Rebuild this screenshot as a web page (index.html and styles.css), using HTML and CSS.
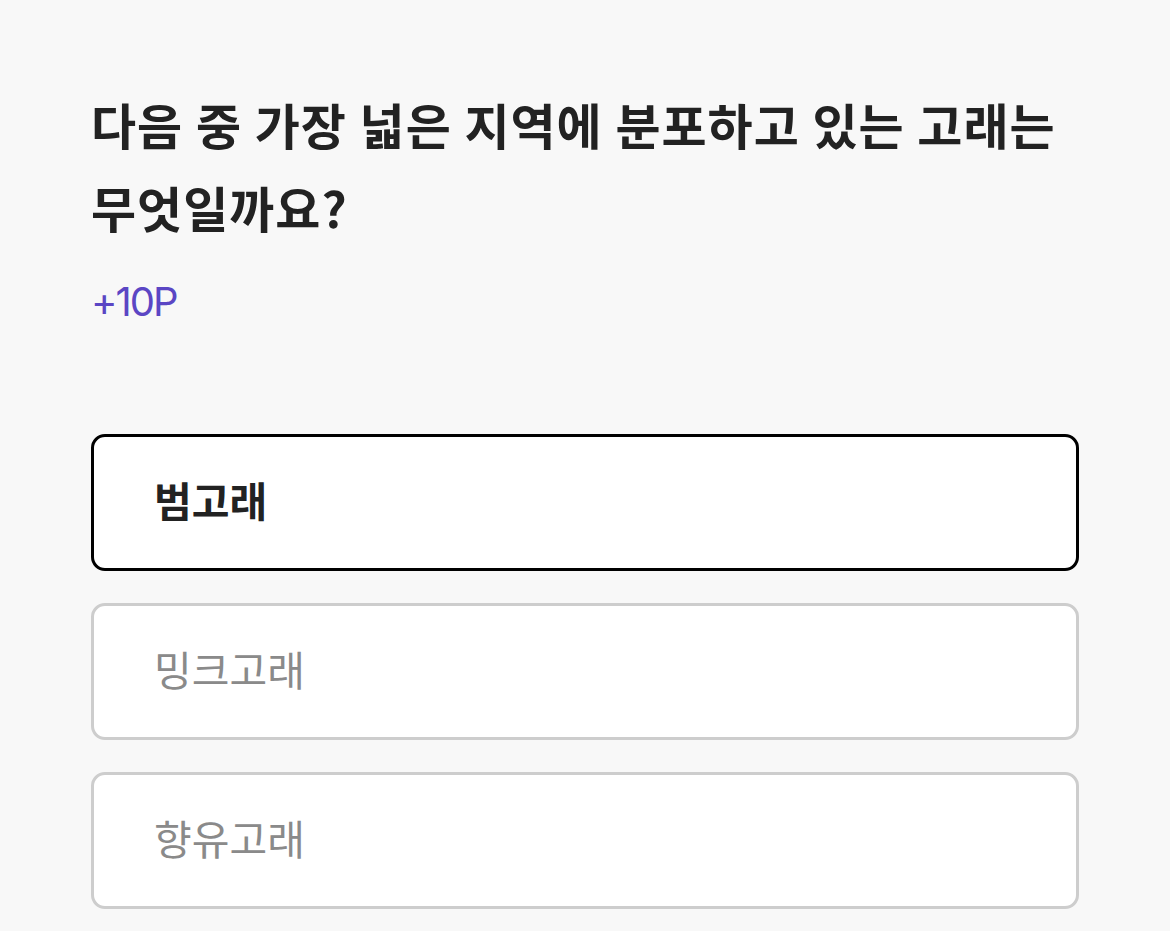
FILE: index.html
```html
<!DOCTYPE html>
<html lang="ko">
<head>
    <meta charset="UTF-8">
    <meta name="viewport" content="width=device-width, initial-scale=1.0">
    <title>Quiz</title>
    <link rel="stylesheet" href="styles.css">
</head>
<body>
    <div class="quiz">
        <h1 class="question">다음 중 가장 넓은 지역에 분포하고 있는 고래는 무엇일까요?</h1>
        <div class="point">+10P</div>
        <div class="options">
            <button class="option selected">범고래</button>
            <button class="option">밍크고래</button>
            <button class="option">향유고래</button>
        </div>
    </div>
</body>
</html>
```

FILE: styles.css
```css
body {
    margin: 0;
    background-color: #f8f8f8;
    font-family: "Noto Sans CJK KR", "Noto Sans", sans-serif;
    color: #222;
}

.quiz {
    padding: 82px 91px 0 91px;
}

.question {
    margin: 0;
    font-size: 49px;
    font-weight: 700;
    line-height: 83px;
    letter-spacing: 1px;
    word-spacing: -2px;
    color: #222;
}

.point {
    margin-top: 29px;
    font-family: Inter, "Noto Sans", sans-serif;
    font-size: 40px;
    line-height: 50px;
    letter-spacing: -2px;
    color: #5b46c4;
}

.options {
    display: flex;
    flex-direction: column;
    gap: 32px;
    margin-top: 107px;
}

.option {
    height: 137px;
    box-sizing: border-box;
    text-align: left;
    padding: 0 60px 8px;
    background: #fff;
    border: 3px solid #cdcdcd;
    border-radius: 14px;
    font-family: inherit;
    font-size: 41px;
    color: #8a8a8a;
}

.option.selected {
    border-color: #000;
    color: #222;
    font-weight: 700;
}
```
